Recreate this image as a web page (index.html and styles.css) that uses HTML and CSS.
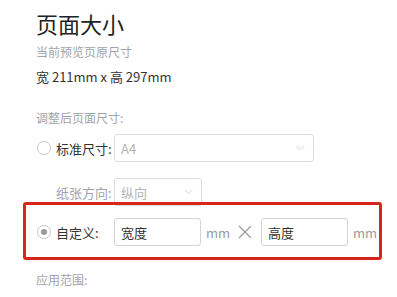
FILE: index.html
```html
<!DOCTYPE html>
<html lang="zh">
<head>
<meta charset="utf-8">
<link rel="stylesheet" href="styles.css">
</head>
<body>
<div class="page">
  <div class="title">页面大小</div>
  <div class="subtitle">当前预览页原尺寸</div>
  <div class="info">宽 211mm x 高 297mm</div>
  <div class="section-label">调整后页面尺寸:</div>

  <div class="row row-std">
    <span class="radio"></span>
    <span class="label">标准尺寸:</span>
    <div class="select select-wide">
      <span class="select-text">A4</span>
      <svg class="chevron" width="9" height="6" viewBox="0 0 9 6"><path d="M0.5 0.8 L4.5 4.8 L8.5 0.8" fill="none" stroke="#d6d6d6" stroke-width="1"/></svg>
    </div>
  </div>

  <div class="row row-dir">
    <span class="label label-muted">纸张方向:</span>
    <div class="select select-narrow">
      <span class="select-text">纵向</span>
      <svg class="chevron" width="9" height="6" viewBox="0 0 9 6"><path d="M0.5 0.8 L4.5 4.8 L8.5 0.8" fill="none" stroke="#d6d6d6" stroke-width="1"/></svg>
    </div>
  </div>

  <div class="row row-custom">
    <span class="highlight"></span>
    <span class="radio radio-checked"></span>
    <span class="label">自定义:</span>
    <div class="input"><span>宽度</span></div>
    <span class="unit">mm</span>
    <svg class="times" width="14" height="14" viewBox="0 0 14 14"><path d="M1 1 L13 13 M13 1 L1 13" fill="none" stroke="#999" stroke-width="1.2"/></svg>
    <div class="input"><span>高度</span></div>
    <span class="unit">mm</span>
  </div>

  <div class="section-label scope">应用范围:</div>
</div>
</body>
</html>
```

FILE: styles.css
```css
html, body {
  margin: 0;
  padding: 0;
  background: #ffffff;
}
body {
  font-family: "Noto Sans CJK SC", "Noto Sans", sans-serif;
  color: #333333;
  width: 397px;
  height: 297px;
  overflow: hidden;
}
.page {
  padding: 8px 0 0 36px;
}
.title {
  font-size: 22px;
  line-height: 30px;
  color: #222222;
}
.subtitle {
  margin-top: 4px;
  font-size: 12px;
  line-height: 20px;
  color: #a0a4aa;
}
.info {
  margin-top: 5px;
  font-size: 13px;
  line-height: 20px;
  color: #333333;
}
.section-label {
  margin-top: 21px;
  font-size: 12px;
  line-height: 20px;
  color: #a0a4aa;
}
.row {
  display: flex;
  align-items: center;
  height: 28px;
  font-size: 13px;
}
.row-std {
  margin-top: 6px;
}
.row-dir {
  margin-top: 16px;
  padding-left: 20px;
}
.row-custom {
  margin-top: 12px;
  position: relative;
}
.radio {
  box-sizing: border-box;
  width: 14px;
  height: 14px;
  margin-left: 1px;
  border: 1px solid #c4c4c4;
  border-radius: 50%;
  display: flex;
  align-items: center;
  justify-content: center;
  flex: none;
}
.radio-checked::after {
  content: "";
  width: 6px;
  height: 6px;
  border-radius: 50%;
  background: #9a9a9a;
}
.label {
  margin-left: 5px;
  width: 58px;
  flex: none;
  color: #333333;
}
.row-dir .label {
  margin-left: 0;
}
.label-muted {
  color: #a0a4aa;
}
.select {
  box-sizing: border-box;
  height: 28px;
  border: 1px solid #dcdcdc;
  border-radius: 3px;
  display: flex;
  align-items: center;
  justify-content: space-between;
  padding: 0 6px 0 6px;
}
.select-wide {
  width: 200px;
}
.select-narrow {
  width: 88px;
}
.select-text {
  color: #b4b4b4;
}
.chevron {
  display: block;
  margin-right: 2px;
}
.input {
  box-sizing: border-box;
  width: 87px;
  height: 28px;
  border: 1px solid #d4d4d4;
  border-radius: 3px;
  padding-left: 6px;
  display: flex;
  align-items: center;
  color: #333333;
}
.unit {
  margin-left: 5px;
  color: #9a9a9a;
}
.times {
  margin: 0 9px 0 8px;
  display: block;
}
.highlight {
  position: absolute;
  left: -13px;
  top: -16px;
  width: 359px;
  height: 58px;
  box-sizing: border-box;
  border: 3px solid #d9261c;
  border-radius: 3px;
  pointer-events: none;
}
.scope {
  margin-top: 24px;
}
```
